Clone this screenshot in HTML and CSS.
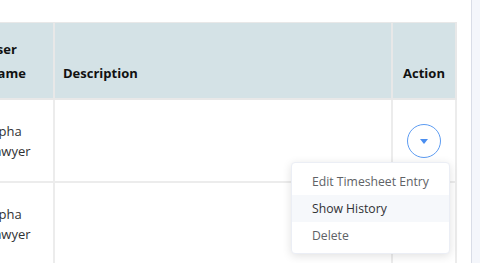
FILE: index.html
```html
<html>
  <head>
    <title>Timesheet</title>
    <link rel="stylesheet" href="styles.css">
  </head>
  <body>
    <div class="page">
      <div class="main">
        <div class="table">
          <div class="cell head">User Name</div>
          <div class="cell head">Description</div>
          <div class="cell head center">Action</div>

          <div class="cell">Alpha Sawyer</div>
          <div class="cell"></div>
          <div class="cell center">
            <button class="action-btn">
              <svg width="8" height="5" viewBox="0 0 8 5"><path d="M0 0h8L4 5z" fill="#4a8ef0"/></svg>
            </button>
          </div>

          <div class="cell">Alpha Sawyer</div>
          <div class="cell"></div>
          <div class="cell center"></div>
        </div>
      </div>
      <div class="side"></div>
    </div>

    <ul class="menu">
      <li>Edit Timesheet Entry</li>
      <li class="hover">Show History</li>
      <li>Delete</li>
    </ul>
  </body>
</html>
```

FILE: styles.css
```css
body {
  margin: 0;
  font-family: "Open Sans", "Noto Sans", sans-serif;
  font-size: 13px;
  color: #303133;
  background: #fff;
  overflow: hidden;
}

.page {
  display: flex;
  height: 263px;
}

.main {
  width: 471px;
  overflow: hidden;
  padding-top: 22px;
}

.side {
  flex: 1;
  border-left: 1px solid #d9dde7;
  background: #f4f6fb;
}

.table {
  display: grid;
  grid-template-columns: 76px 338px 64px;
  grid-template-rows: 77px 83px 83px;
  width: 478px;
  margin-left: -23px;
  border-top: 1px solid #e8e8e8;
  border-left: 2px solid #e8e8e8;
}

.cell {
  display: flex;
  align-items: center;
  padding: 0 8px;
  line-height: 20px;
  border-right: 2px solid #ececec;
  border-bottom: 2px solid #ececec;
}

.head {
  align-items: flex-end;
  padding-bottom: 13px;
  line-height: 24px;
  font-weight: bold;
  color: #111;
  background: #d4e2e6;
  border-color: #e8e8e8;
}

.center {
  justify-content: center;
}

.action-btn {
  width: 34px;
  height: 34px;
  padding: 2px 0 0 0;
  border: 1px solid #5d9cf2;
  border-radius: 50%;
  background: #fff;
  display: flex;
  align-items: center;
  justify-content: center;
}

.menu {
  position: absolute;
  left: 291px;
  top: 162px;
  width: 157px;
  margin: 0;
  padding: 5px 0 4px 0;
  list-style: none;
  background: #fff;
  border: 1px solid #ebeef5;
  border-radius: 4px;
  box-shadow: 0 2px 10px rgba(0, 0, 0, 0.12);
}

.menu li {
  padding: 0 20px;
  font-size: 12.2px;
  line-height: 27px;
  height: 27px;
  color: #606266;
  white-space: nowrap;
}

.menu li.hover {
  background: #f6f8fb;
  color: #303133;
}
```
